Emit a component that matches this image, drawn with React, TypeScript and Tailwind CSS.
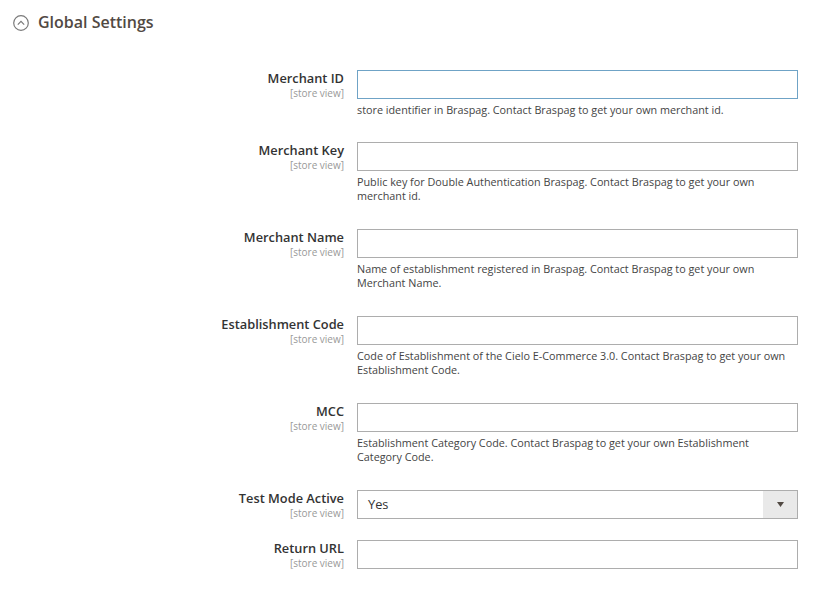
import React from 'react';

type Field = {
  label: string;
  note?: string;
  select?: string;
  focused?: boolean;
  pb: string;
};

const fields: Field[] = [
  {
    label: 'Merchant ID',
    note: 'store identifier in Braspag. Contact Braspag to get your own merchant id.',
    focused: true,
    pb: 'pb-[25px]',
  },
  {
    label: 'Merchant Key',
    note: 'Public key for Double Authentication Braspag. Contact Braspag to get your own merchant id.',
    pb: 'pb-[26px]',
  },
  {
    label: 'Merchant Name',
    note: 'Name of establishment registered in Braspag. Contact Braspag to get your own Merchant Name.',
    pb: 'pb-[26px]',
  },
  {
    label: 'Establishment Code',
    note: 'Code of Establishment of the Cielo E-Commerce 3.0. Contact Braspag to get your own Establishment Code.',
    pb: 'pb-[26px]',
  },
  {
    label: 'MCC',
    note: 'Establishment Category Code. Contact Braspag to get your own Establishment Category Code.',
    pb: 'pb-[26px]',
  },
  { label: 'Test Mode Active', select: 'Yes', pb: 'pb-[21px]' },
  { label: 'Return URL', pb: 'pb-0' },
];

function Row({ f }: { f: Field }) {
  return (
    <div className={`flex items-start gap-[13px] ${f.pb}`}>
      <div className="w-[344px] shrink-0 text-right">
        <div className="text-[12.8px] font-semibold leading-[17px] text-[#333]">{f.label}</div>
        <div className="text-[10px] leading-[12px] text-[#999]">[store view]</div>
      </div>
      <div className="w-[441px] shrink-0">
        {f.select ? (
          <div className="flex h-[29px] items-stretch border border-[#adadad] bg-white">
            <div className="flex flex-1 items-center pl-[10px] text-[12.8px] text-[#333]">{f.select}</div>
            <div className="flex w-[34px] items-center justify-center bg-[#e9e9e9]">
              <svg width="7" height="5" viewBox="0 0 7 5">
                <path d="M0 0 H7 L3.5 5 Z" fill="#514943" />
              </svg>
            </div>
          </div>
        ) : (
          <input
            className={`block h-[29px] w-full border bg-white px-[8px] text-[12px] outline-none ${
              f.focused ? 'border-[#6fa3c6]' : 'border-[#adadad]'
            }`}
          />
        )}
        {f.note && (
          <div className="mt-[4px] pr-[8px] text-[10.8px] leading-[14px] text-[#444]">{f.note}</div>
        )}
      </div>
    </div>
  );
}

export default function App() {
  return (
    <div className="min-h-[591px] bg-white" style={{ fontFamily: '"Open Sans", "Liberation Sans", sans-serif' }}>
      <div className="flex items-center gap-[9px] pl-[13px] pt-[13px]">
        <svg width="16" height="16" viewBox="0 0 16 16">
          <circle cx="8" cy="8" r="7.3" fill="none" stroke="#7a7a7a" strokeWidth="1.2" />
          <path d="M4.8 9.6 L8 6.4 L11.2 9.6" fill="none" stroke="#7a7a7a" strokeWidth="1.2" />
        </svg>
        <span className="text-[16px] font-semibold leading-[19px] text-[#514943]">Global Settings</span>
      </div>
      <div className="flex flex-col pt-[38px]">
        {fields.map((f) => (
          <Row key={f.label} f={f} />
        ))}
      </div>
    </div>
  );
}
